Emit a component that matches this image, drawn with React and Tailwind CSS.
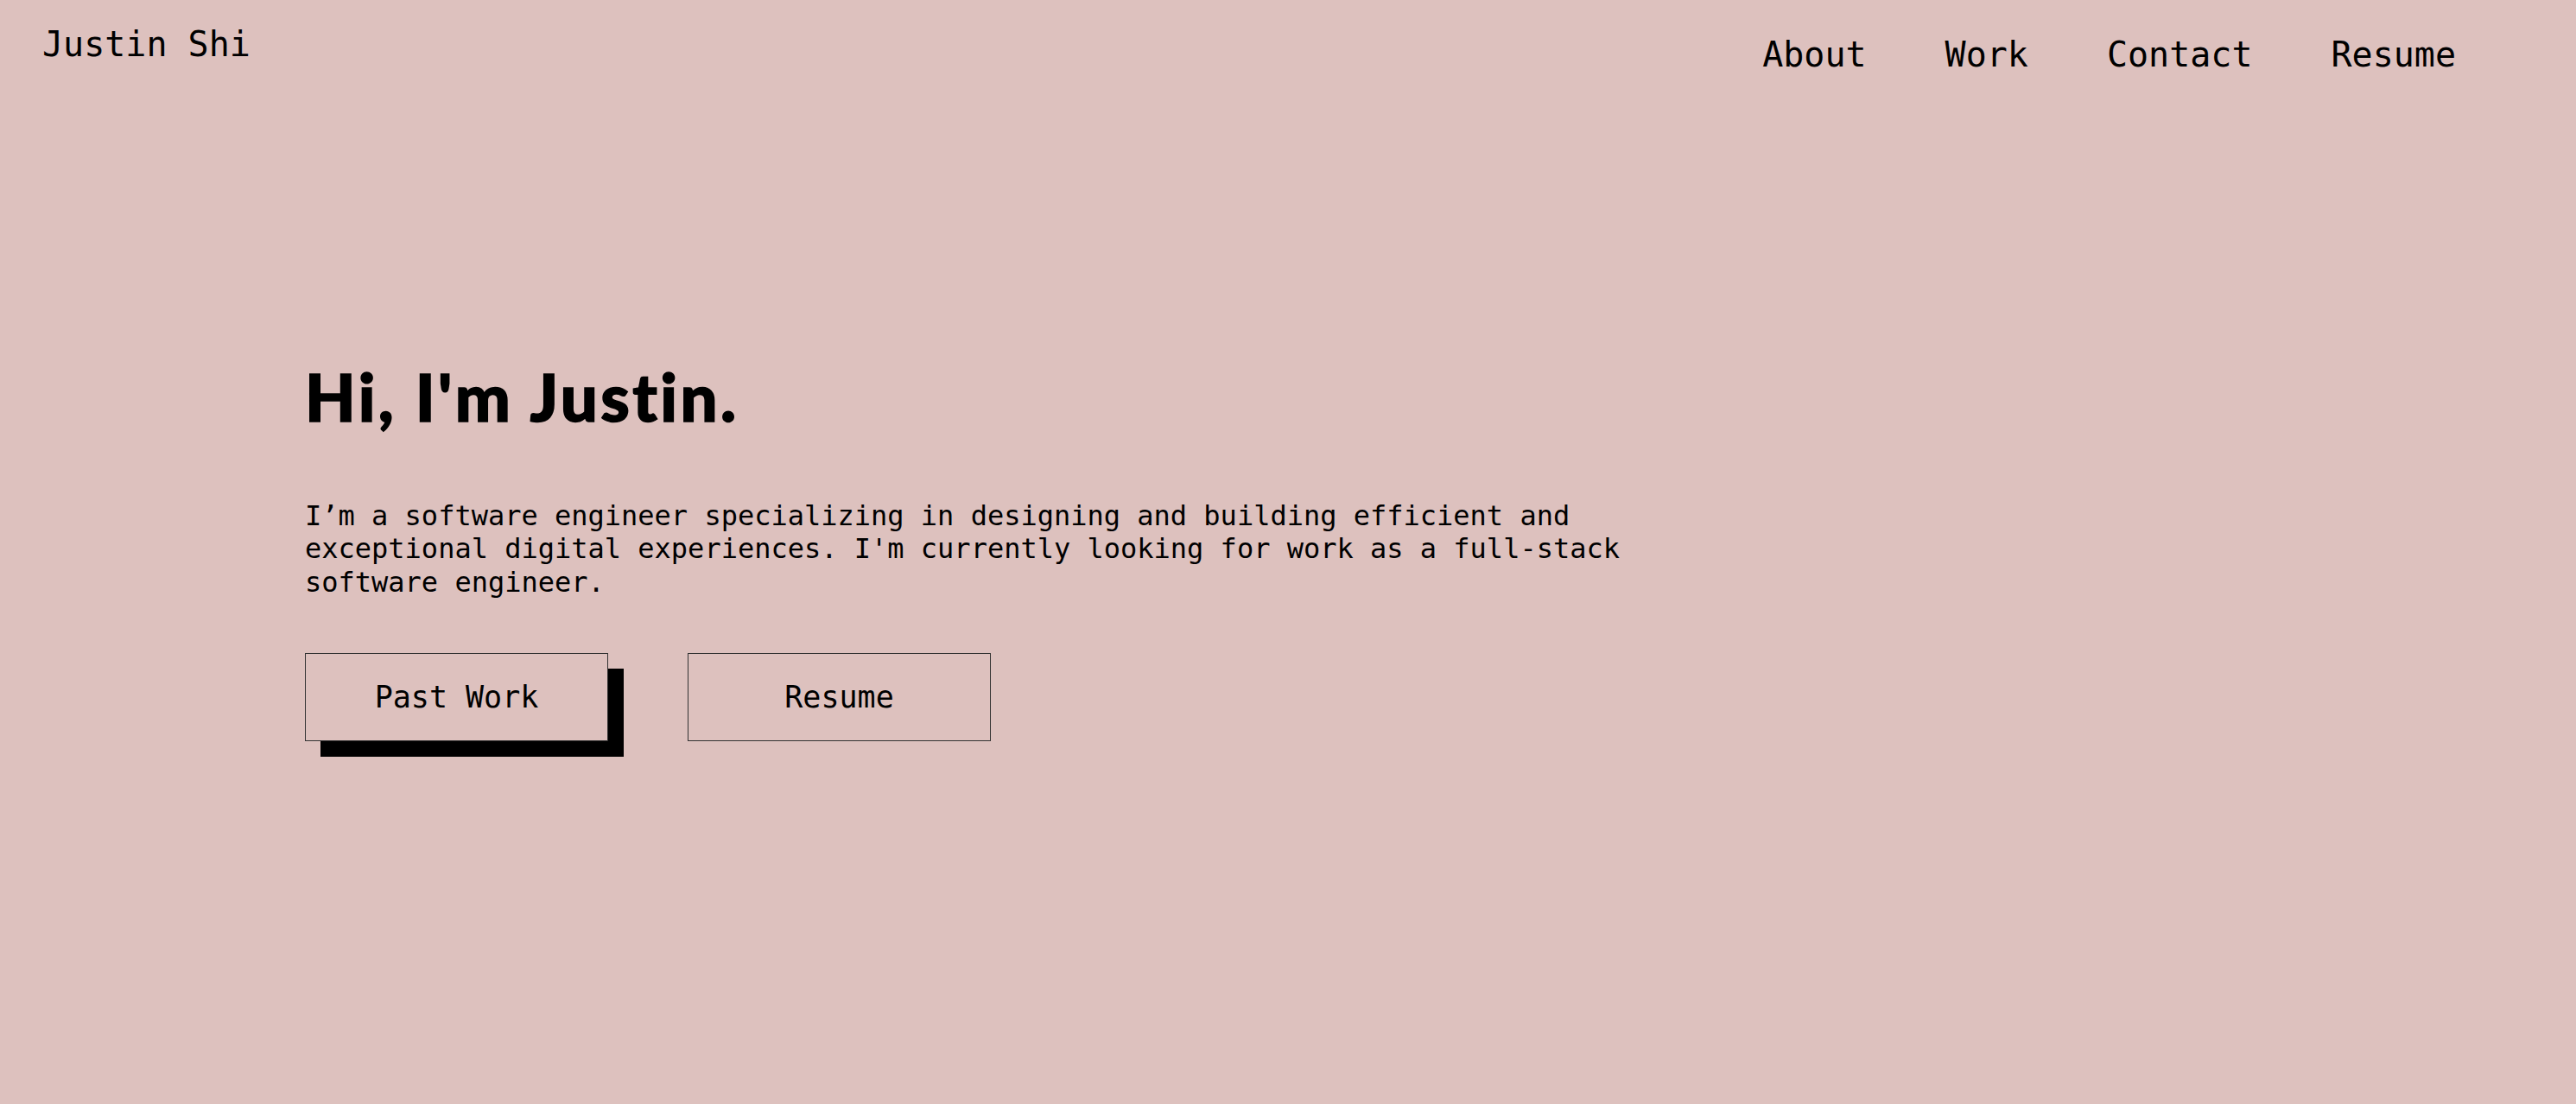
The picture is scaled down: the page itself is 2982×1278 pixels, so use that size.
export default function App() {
  return (
    <div className="min-h-screen w-full bg-[#ddc1be] text-black font-['DejaVu_Sans_Mono',monospace]">
      <header className="flex justify-between items-start">
        <a className="pl-[49px] pt-[31px] text-[40px] leading-none">Justin Shi</a>
        <nav className="flex gap-[91px] pr-[139px] pt-[43px] text-[40px] leading-none">
          <a>About</a>
          <a>Work</a>
          <a>Contact</a>
          <a>Resume</a>
        </nav>
      </header>

      <main className="pl-[353px] pt-[338px]">
        <h1 className="font-['Lato',sans-serif] font-black text-[76px] leading-none tracking-[3.4px] [font-variant-ligatures:none] [-webkit-text-stroke:1.5px_#000]">
          Hi, I'm Justin.
        </h1>
        <p className="mt-[81px] w-[1600px] text-[32px] leading-[1.2]">
          I’m a software engineer specializing in designing and building efficient and
          exceptional digital experiences. I'm currently looking for work as a full-stack
          software engineer.
        </p>
        <div className="mt-[63px] flex gap-[92px]">
          <button className="w-[351px] h-[102px] border border-[#333] text-[35px] shadow-[18px_18px_0_#000]">
            Past Work
          </button>
          <button className="w-[351px] h-[102px] border border-[#333] text-[35px]">
            Resume
          </button>
        </div>
      </main>
    </div>
  );
}
